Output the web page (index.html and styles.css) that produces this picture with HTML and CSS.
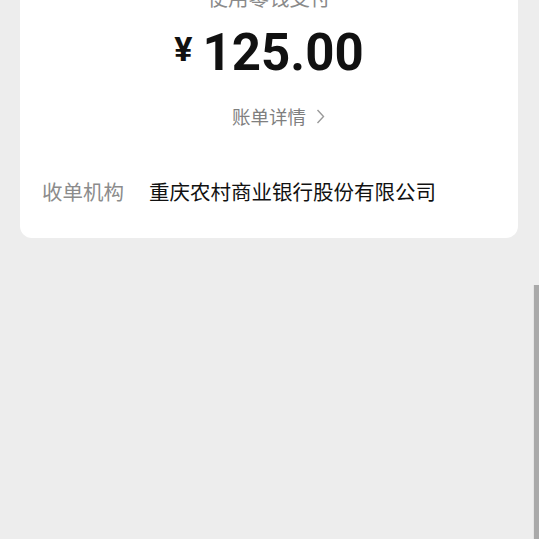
FILE: index.html
```html
<!DOCTYPE html>
<html lang="zh-CN">

<head>
    <meta charset="UTF-8">
    <title>支付详情</title>
    <meta name="viewport" content="width=device-width, initial-scale=1.0">
    <link rel="stylesheet" href="styles.css">
</head>

<body>

    <div class="card">
        <div class="pay-way">使用零钱支付</div>
        <div class="amount"><span class="yen">¥</span>125.00</div>
        <div class="bill-link">账单详情
            <svg class="chevron" width="9" height="15" viewBox="0 0 9 15">
                <path d="M1.5 1 L7.5 7.5 L1.5 14" fill="none" stroke="#9a9a9a" stroke-width="1.4" />
            </svg>
        </div>
        <div class="row">
            <span class="label">收单机构</span>
            <span class="value">重庆农村商业银行股份有限公司</span>
        </div>
    </div>

    <!-- scroll thumb drawn over the page edge -->
    <div class="scroll-thumb"></div>

</body>
</html>
```

FILE: styles.css
```css
* {
    box-sizing: border-box;
    margin: 0;
    padding: 0;
}

html, body {
    height: 100%;
    width: 100%;
    overflow: hidden;
    background: #ededed;
    font-family: 'Noto Sans CJK SC', 'Noto Sans', sans-serif;
    color: #111;
}

.card {
    margin: -33px 21px 0 20px;
    padding: 20px 22px 33px 22px;
    background: #fff;
    border-radius: 12px;
    display: flex;
    flex-direction: column;
    align-items: center;
}

.pay-way {
    font-size: 20.5px;
    line-height: 20px;
    color: #8a8a8a;
}

.amount {
    margin-top: 20px;
    display: flex;
    align-items: baseline;
    font-family: Roboto, 'Noto Sans', sans-serif;
    font-weight: 700;
    font-size: 51px;
    line-height: 52px;
    color: #111;
}

.yen {
    font-size: 34px;
    font-weight: 700;
    margin-right: 10px;
    position: relative;
    top: -9px;
}

/* text stays centred, the chevron hangs off its right side */
.bill-link {
    margin-top: 20px;
    margin-left: 19px;
    display: flex;
    align-items: center;
    gap: 10px;
    font-size: 18.5px;
    line-height: 24px;
    color: #7f7f7f;
}

.chevron {
    margin-top: 1px;
}

.row {
    align-self: stretch;
    margin-top: 49px;
    display: flex;
    align-items: center;
    gap: 25px;
    line-height: 28px;
}

.label {
    font-size: 20.5px;
    color: #8c8c8c;
}

.value {
    font-size: 20.5px;
    color: #111;
}

.scroll-thumb {
    position: fixed;
    right: 0;
    top: 285px;
    bottom: 0;
    width: 6px;
    background: #a9a9a9;
    border-left: 1px solid #e4e4e4;
}
```
